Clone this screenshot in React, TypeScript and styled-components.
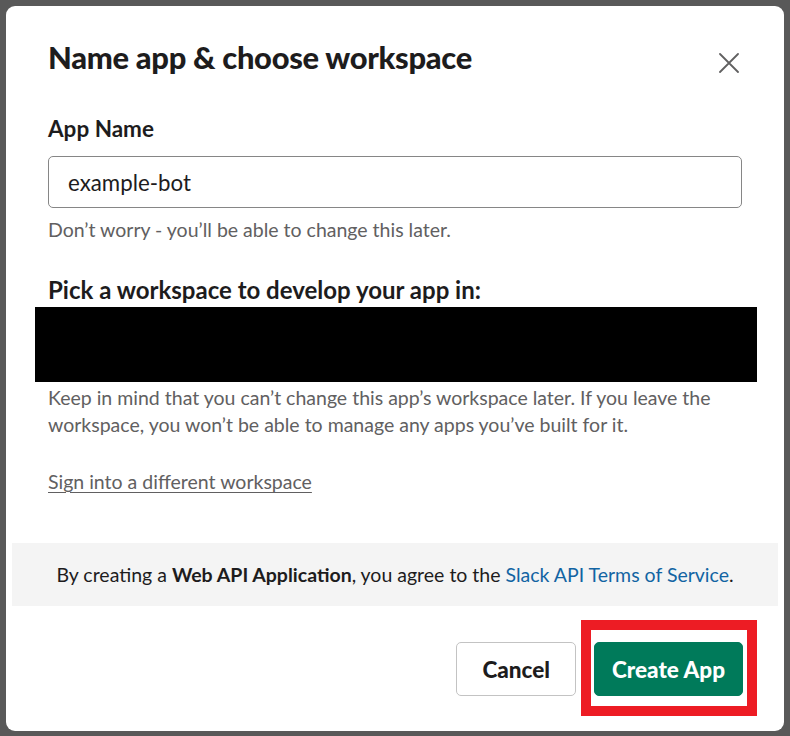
import React from "react";
import styled, { createGlobalStyle } from "styled-components";

const Global = createGlobalStyle`
  html, body { margin: 0; padding: 0; }
  body {
    width: 790px;
    height: 736px;
    overflow: hidden;
    background: #595959;
    font-family: Lato, "Noto Sans", sans-serif;
    color: #1d1c1d;
  }
`;

const Backdrop = styled.div`
  width: 790px;
  height: 736px;
  box-sizing: border-box;
  padding: 6px 6px 5px 6px;
  display: flex;
`;

const Modal = styled.div`
  flex: 1;
  background: #fff;
  border-radius: 9px;
  display: flex;
  flex-direction: column;
  overflow: hidden;
`;

const Header = styled.div`
  display: flex;
  justify-content: space-between;
  align-items: flex-start;
  padding: 32px 37px 0 42px;
`;

const Title = styled.h1`
  margin: 0;
  font-size: 30.9px;
  font-weight: 900;
  line-height: 40px;
  letter-spacing: -0.3px;
  color: #1d1c1d;
`;

const CloseButton = styled.button`
  margin-top: 6px;
  width: 37px;
  height: 37px;
  border: 0;
  background: transparent;
  padding: 0;
  display: flex;
  align-items: center;
  justify-content: center;
  cursor: pointer;
`;

const Body = styled.div`
  display: flex;
  flex-direction: column;
  padding: 0 42px 48px 42px;
`;

const Label = styled.label<{ $top: number; $size: number }>`
  display: block;
  margin-top: ${(p) => p.$top}px;
  font-size: ${(p) => p.$size}px;
  font-weight: 700;
  line-height: 27px;
  color: #1d1c1d;
`;

const Input = styled.input`
  margin-top: 14px;
  height: 52px;
  box-sizing: border-box;
  border: 1px solid #868686;
  border-radius: 5px;
  padding: 0 19px;
  font-family: Lato, "Noto Sans", sans-serif;
  font-size: 22.3px;
  color: #1d1c1d;
  outline: none;
`;

const Hint = styled.p<{ $top: number }>`
  margin: ${(p) => p.$top}px 0 0 0;
  font-size: 19.5px;
  line-height: 27px;
  color: #616061;
`;

const Redacted = styled.div`
  margin: 4px -15px 0 -13px;
  height: 75px;
  background: #000;
`;

const SignLink = styled.a`
  margin-top: 30px;
  align-self: flex-start;
  font-size: 19.5px;
  line-height: 27px;
  color: #616061;
  text-decoration: underline;
  text-underline-offset: 3px;
  text-decoration-thickness: 1px;
`;

const Terms = styled.div`
  margin: 0 6px;
  height: 63px;
  background: #f4f4f4;
  display: flex;
  align-items: center;
  justify-content: center;
  font-size: 19.5px;
  line-height: 27px;
  color: #1d1c1d;
  b { font-weight: 700; }
`;

const TermsLink = styled.a`
  color: #1264a3;
  text-decoration: none;
`;

const Actions = styled.div`
  display: flex;
  justify-content: flex-end;
  align-items: center;
  gap: 18px;
  padding: 36px 41px 0 0;
`;

const Button = styled.button<{ $primary?: boolean }>`
  height: 54px;
  box-sizing: border-box;
  padding: 0 ${(p) => (p.$primary ? 17 : 25)}px;
  border-radius: 5px;
  border: 1px solid ${(p) => (p.$primary ? "#007a5a" : "#c3c3c3")};
  background: ${(p) => (p.$primary ? "#007a5a" : "#fff")};
  color: ${(p) => (p.$primary ? "#fff" : "#1d1c1d")};
  font-family: Lato, "Noto Sans", sans-serif;
  font-size: 22.5px;
  font-weight: 900;
  cursor: pointer;
`;

const Highlight = styled.div`
  position: relative;
  display: flex;
`;

const RedBox = styled.div`
  position: absolute;
  left: -13px;
  top: -22px;
  right: -14px;
  bottom: -20px;
  border: 10px solid #ed1c24;
  pointer-events: none;
`;

export default function App() {
  return (
    <>
      <Global />
      <Backdrop>
        <Modal>
          <Header>
            <Title>Name app &amp; choose workspace</Title>
            <CloseButton aria-label="Close">
              <svg width="20" height="20" viewBox="0 0 20 20">
                <path
                  d="M1 1 L19 19 M19 1 L1 19"
                  stroke="#616061"
                  strokeWidth="1.8"
                  strokeLinecap="round"
                  fill="none"
                />
              </svg>
            </CloseButton>
          </Header>
          <Body>
            <Label $top={34} $size={22.5}>App Name</Label>
            <Input defaultValue="example-bot" />
            <Hint $top={8}>Don’t worry - you’ll be able to change this later.</Hint>
            <Label $top={33} $size={24}>Pick a workspace to develop your app in:</Label>
            <Redacted />
            <Hint $top={2}>
              Keep in mind that you can’t change this app’s workspace later. If you leave the
              workspace, you won’t be able to manage any apps you’ve built for it.
            </Hint>
            <SignLink href="#">Sign into a different workspace</SignLink>
          </Body>
          <Terms>
            <span>
              By creating a <b>Web API Application</b>, you agree to the{" "}
              <TermsLink href="#">Slack API Terms of Service</TermsLink>.
            </span>
          </Terms>
          <Actions>
            <Button>Cancel</Button>
            <Highlight>
              <Button $primary>Create App</Button>
              <RedBox />
            </Highlight>
          </Actions>
        </Modal>
      </Backdrop>
    </>
  );
}
